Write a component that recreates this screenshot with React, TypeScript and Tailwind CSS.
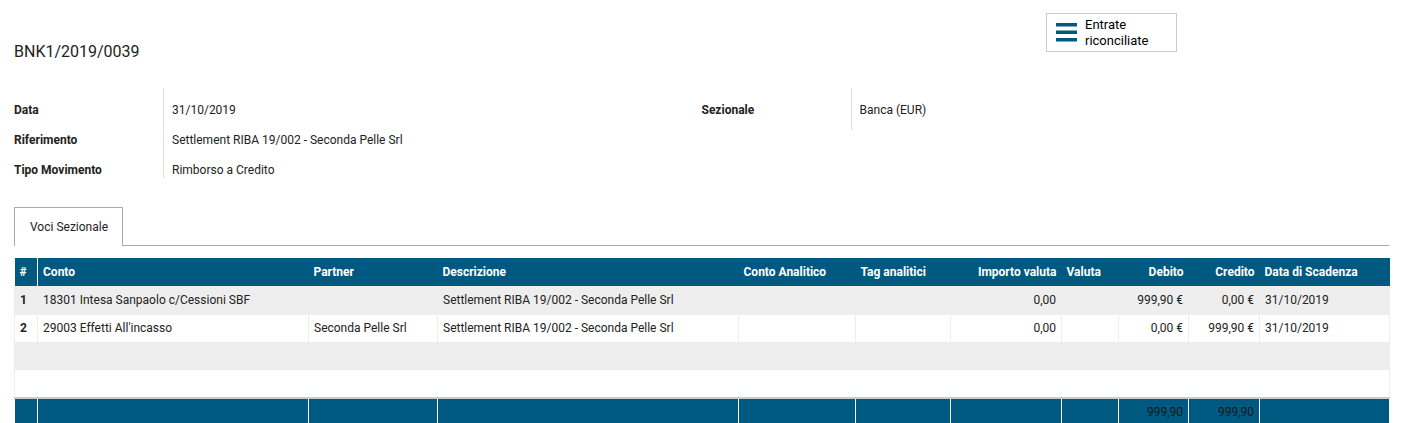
import React from "react";

const cols = [
  { key: "n", title: "#", w: "w-[23px]", align: "text-left" },
  { key: "conto", title: "Conto", w: "w-[271px]", align: "text-left" },
  { key: "partner", title: "Partner", w: "w-[129px]", align: "text-left" },
  { key: "desc", title: "Descrizione", w: "w-[301px]", align: "text-left" },
  { key: "analitico", title: "Conto Analitico", w: "w-[117px]", align: "text-left" },
  { key: "tag", title: "Tag analitici", w: "w-[95px]", align: "text-left" },
  { key: "importo", title: "Importo valuta", w: "w-[111px]", align: "text-right" },
  { key: "valuta", title: "Valuta", w: "w-[57px]", align: "text-left" },
  { key: "debito", title: "Debito", w: "w-[70px]", align: "text-right" },
  { key: "credito", title: "Credito", w: "w-[71px]", align: "text-right" },
  { key: "data", title: "Data di Scadenza", w: "w-[130px]", align: "text-left" },
];

type Row = Record<string, string>;

const rows: Row[] = [
  {
    n: "1",
    conto: "18301 Intesa Sanpaolo c/Cessioni SBF",
    partner: "",
    desc: "Settlement RIBA 19/002 - Seconda Pelle Srl",
    analitico: "",
    tag: "",
    importo: "0,00",
    valuta: "",
    debito: "999,90 €",
    credito: "0,00 €",
    data: "31/10/2019",
  },
  {
    n: "2",
    conto: "29003 Effetti All'incasso",
    partner: "Seconda Pelle Srl",
    desc: "Settlement RIBA 19/002 - Seconda Pelle Srl",
    analitico: "",
    tag: "",
    importo: "0,00",
    valuta: "",
    debito: "0,00 €",
    credito: "999,90 €",
    data: "31/10/2019",
  },
  {},
  {},
];

function FieldRow({ children, bold }: { children: React.ReactNode; bold?: boolean }) {
  return (
    <div className={`h-[30px] pt-[13px] leading-[18px] ${bold ? "font-bold" : ""}`}>{children}</div>
  );
}

export default function App() {
  return (
    <div className="min-h-screen bg-white px-[14px] text-[12px] text-[#222] font-['Roboto','Liberation_Sans',sans-serif]">
      {/* intestazione */}
      <div className="flex h-[88px] items-start pt-[13px]">
        <h1 className="mt-[29px] text-[16px] leading-[20px] font-normal text-[#222]">BNK1/2019/0039</h1>
        <button className="ml-auto mr-[212px] flex h-[39px] w-[131px] items-center gap-[8px] border border-[#ccc] bg-white pl-[9px] text-left text-[13px] leading-[16px] text-black">
          <svg width="21" height="19" viewBox="0 0 21 19">
            <rect x="0" y="0" width="21" height="3.5" fill="#005980" />
            <rect x="0" y="7.5" width="21" height="3.5" fill="#005980" />
            <rect x="0" y="15" width="21" height="3.5" fill="#005980" />
          </svg>
          <span>
            Entrate
            <br />
            riconciliate
          </span>
        </button>
      </div>

      {/* campi */}
      <div className="grid grid-cols-2">
        <div className="flex">
          <div className="w-[149px]">
            <FieldRow bold>Data</FieldRow>
            <FieldRow bold>Riferimento</FieldRow>
            <FieldRow bold>Tipo Movimento</FieldRow>
          </div>
          <div className="border-l border-[#ddd] pl-[8px]">
            <FieldRow>31/10/2019</FieldRow>
            <FieldRow>Settlement RIBA 19/002 - Seconda Pelle Srl</FieldRow>
            <FieldRow>Rimborso a Credito</FieldRow>
          </div>
        </div>
        <div className="flex items-start">
          <div className="w-[149px]">
            <FieldRow bold>Sezionale</FieldRow>
          </div>
          <div className="min-h-[42px] border-l border-[#ddd] pl-[8px]">
            <FieldRow>Banca (EUR)</FieldRow>
          </div>
        </div>
      </div>

      {/* tab */}
      <div className="mt-[29px] flex border-b border-[#aaa]">
        <div className="-mb-px flex h-[39px] w-[109px] items-center border border-b-0 border-[#aaa] bg-white pl-[15px] text-[12px] text-[#222]">
          Voci Sezionale
        </div>
      </div>

      {/* tabella */}
      <table className="mt-[12px] w-[1375px] table-fixed border-collapse">
        <thead>
          <tr className="h-[28px] bg-[#005980] text-white">
            {cols.map((c, i) => (
              <th
                key={c.key}
                className={`${c.w} ${c.align} px-[5px] font-bold whitespace-nowrap ${
                  i === 0 ? "border-r border-white" : ""
                }`}
              >
                {c.title}
              </th>
            ))}
          </tr>
        </thead>
        <tbody>
          {rows.map((r, ri) => {
            const empty = !r.n;
            return (
              <tr key={ri} className={`h-[28px] ${ri % 2 === 0 ? "bg-[#eeeeee]" : "bg-white"}`}>
                {cols.map((c, ci) => {
                  let border = "border border-[#eeeeee]";
                  if (empty) {
                    border =
                      ci === 0
                        ? "border-l border-[#eeeeee]"
                        : ci === cols.length - 1
                        ? "border-r border-[#eeeeee]"
                        : "";
                  }
                  return (
                    <td
                      key={c.key}
                      className={`${c.align} ${border} px-[5px] whitespace-nowrap ${ci === 0 ? "font-bold" : ""}`}
                    >
                      {r[c.key] ?? ""}
                    </td>
                  );
                })}
              </tr>
            );
          })}
          <tr className="h-[28px] border-t-2 border-[#ccc] bg-[#005980] text-[#1a1a1a]">
            {cols.map((c) => (
              <td key={c.key} className={`${c.align} border-r border-white px-[5px] align-top pt-[4px]`}>
                {c.key === "debito" || c.key === "credito" ? "999,90" : ""}
              </td>
            ))}
          </tr>
        </tbody>
      </table>
    </div>
  );
}
